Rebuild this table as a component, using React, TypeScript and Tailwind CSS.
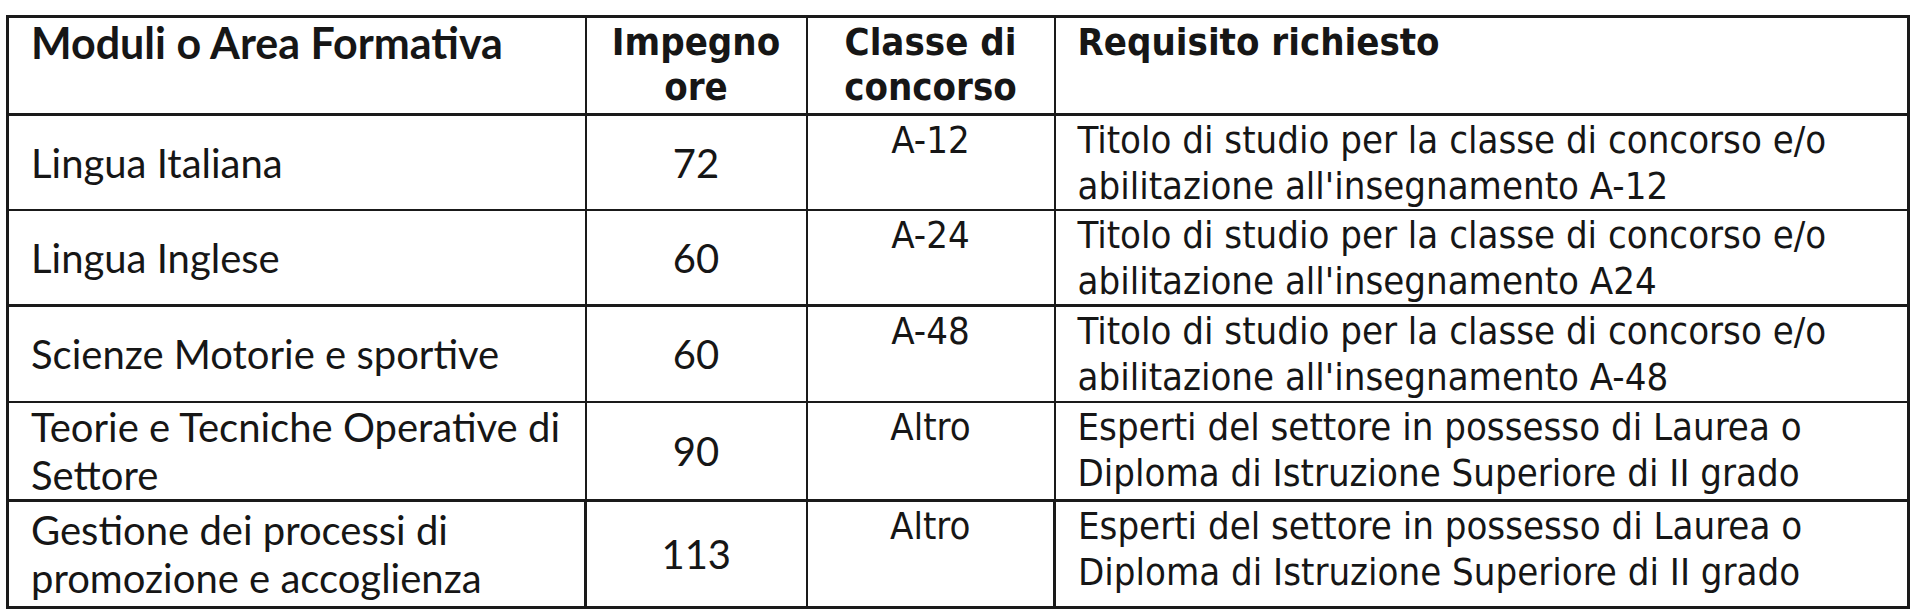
export default function App() {
  const rows = [
    {
      modulo: "Lingua Italiana",
      ore: "72",
      classe: "A-12",
      req: ["Titolo di studio per la classe di concorso e/o", "abilitazione all'insegnamento A-12"],
      h: "h-[94px]",
      line: "border-b-2",
    },
    {
      modulo: "Lingua Inglese",
      ore: "60",
      classe: "A-24",
      req: ["Titolo di studio per la classe di concorso e/o", "abilitazione all'insegnamento A24"],
      h: "h-[95px]",
      line: "border-b-[3px]",
    },
    {
      modulo: "Scienze Motorie e sportive",
      ore: "60",
      classe: "A-48",
      req: ["Titolo di studio per la classe di concorso e/o", "abilitazione all'insegnamento A-48"],
      h: "h-[96px]",
      line: "border-b-2",
    },
    {
      modulo: "Teorie e Tecniche Operative di Settore",
      ore: "90",
      classe: "Altro",
      req: ["Esperti del settore in possesso di Laurea o", "Diploma di Istruzione Superiore di II grado"],
      h: "h-[95px]",
      line: "border-b-[3px]",
    },
    {
      modulo: "Gestione dei processi di promozione e accoglienza",
      ore: "113",
      classe: "Altro",
      req: ["Esperti del settore in possesso di Laurea o", "Diploma di Istruzione Superiore di II grado"],
      h: "h-[107px]",
      line: "border-b-2",
    },
  ];

  const cal = "font-['Lato',sans-serif]";
  const tah = "font-['DejaVu_Sans_Condensed','DejaVu_Sans',sans-serif]";

  return (
    <div className="min-h-[615px] w-[1920px] bg-white pl-[6px] pt-[15px] text-[#161616]">
      <table className="w-[1901px] table-fixed border-collapse border-[3px] border-[#1a1a1a]">
        <colgroup>
          <col className="w-[578px]" />
          <col className="w-[221px]" />
          <col className="w-[248px]" />
          <col className="w-[854px]" />
        </colgroup>
        <thead>
          <tr className="h-[98px]">
            <th className={`border-2 border-b-[3px] border-[#1a1a1a] px-[22px] pt-[1px] text-left align-top text-[43px] leading-[48px] font-bold ${cal}`}>
              Moduli o Area Formativa
            </th>
            <th className={`border-2 border-b-[3px] border-[#1a1a1a] px-1 pt-[2px] text-center align-top text-[38px] leading-[45px] font-bold ${tah}`}>
              Impegno
              <br />
              ore
            </th>
            <th className={`border-2 border-b-[3px] border-[#1a1a1a] px-1 pt-[2px] text-center align-top text-[38px] leading-[45px] font-bold ${tah}`}>
              Classe di
              <br />
              concorso
            </th>
            <th className={`border-2 border-b-[3px] border-[#1a1a1a] px-[22px] pt-[2px] text-left align-top text-[38px] leading-[45px] font-bold ${tah}`}>
              Requisito richiesto
            </th>
          </tr>
        </thead>
        <tbody>
          {rows.map((r, i) => (
            <tr key={r.modulo + r.ore} className={r.h}>
              <td className={`border-2 ${r.line} ${i === 4 ? "border-r-[3px]" : ""} border-[#1a1a1a] px-[22px] align-middle text-[40px] leading-[48px] ${cal}`}>
                {r.modulo}
              </td>
              <td className={`border-2 ${r.line} border-[#1a1a1a] text-center align-middle text-[40px] leading-[48px] ${cal}`}>
                {r.ore}
              </td>
              <td className={`border-2 ${r.line} ${i === 4 ? "border-r-[3px]" : ""} border-[#1a1a1a] pt-[1px] text-center align-top text-[38px] leading-[46px] ${tah}`}>
                {r.classe}
              </td>
              <td className={`border-2 ${r.line} border-[#1a1a1a] px-[22px] pt-[1px] align-top text-[38px] leading-[46px] ${tah}`}>
                {r.req[0]}
                <br />
                {r.req[1]}
              </td>
            </tr>
          ))}
        </tbody>
      </table>
    </div>
  );
}
